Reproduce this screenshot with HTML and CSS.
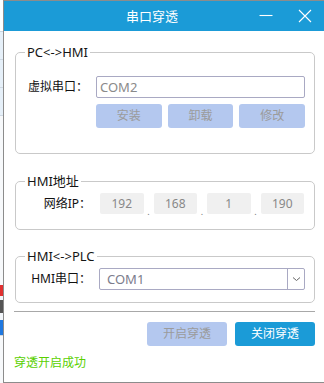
FILE: index.html
```html
<!DOCTYPE html>
<html lang="zh-CN">
<head>
<meta charset="utf-8">
<title>串口穿透</title>
<link rel="stylesheet" href="styles.css">
</head>
<body>
<div class="screen">
  <div class="backdrop">
    <div class="bd bd-white"></div>
    <div class="bd bd-tint"></div>
    <div class="bd bd-tint"></div>
    <div class="bd bd-tint"></div>
    <div class="bd bd-plain"></div>
    <div class="bd bd-red"></div>
    <div class="bd bd-dark"></div>
    <div class="bd bd-blue"></div>
    <div class="bd bd-rest"></div>
  </div>
  <div class="window">
    <div class="titlebar">
      <div class="title">串口穿透</div>
      <button class="tb-btn tb-min" type="button" aria-label="最小化">
        <svg width="14" height="14" viewBox="0 0 14 14"><path d="M0.5 6.5H13.5" stroke="#fff" stroke-width="1.1" fill="none"/></svg>
      </button>
      <button class="tb-btn tb-close" type="button" aria-label="关闭">
        <svg width="14" height="14" viewBox="0 0 14 14"><path d="M1 1L13 13M13 1L1 13" stroke="#fff" stroke-width="1.1" fill="none"/></svg>
      </button>
    </div>
    <div class="content">
      <fieldset class="group g1">
        <legend>PC&lt;-&gt;HMI</legend>
        <div class="g1-grid">
          <span class="lbl">虚拟串口：</span>
          <div class="field">COM2</div>
          <div class="btnrow">
            <button class="btn btn-off" type="button">安装</button>
            <button class="btn btn-off" type="button">卸载</button>
            <button class="btn btn-off" type="button">修改</button>
          </div>
        </div>
      </fieldset>

      <fieldset class="group g2">
        <legend>HMI地址</legend>
        <div class="g2-row">
          <span class="lbl lbl-ip">网络IP：</span>
          <div class="ip">192</div><span class="dot">.</span>
          <div class="ip">168</div><span class="dot">.</span>
          <div class="ip">1</div><span class="dot">.</span>
          <div class="ip">190</div>
        </div>
      </fieldset>

      <fieldset class="group g3">
        <legend>HMI&lt;-&gt;PLC</legend>
        <div class="g3-row">
          <span class="lbl lbl-plc">HMI串口：</span>
          <div class="select">
            <span class="select-val">COM1</span>
            <span class="select-arrow">
              <svg width="9" height="6" viewBox="0 0 9 6"><path d="M1 1.5L4.5 4.5L8 1.5" stroke="#666" stroke-width="1" fill="none"/></svg>
            </span>
          </div>
        </div>
      </fieldset>

      <div class="sep"></div>

      <div class="actions">
        <button class="btn btn-big btn-off" type="button">开启穿透</button>
        <button class="btn btn-big btn-on" type="button">关闭穿透</button>
      </div>

      <div class="status">穿透开启成功</div>
    </div>
  </div>
</div>
</body>
</html>
```

FILE: styles.css
```css
html, body {
  margin: 0;
  padding: 0;
}
body {
  width: 324px;
  height: 383px;
  overflow: hidden;
  background: #ffffff;
  font-family: "Noto Sans", "Noto Sans CJK SC", sans-serif;
  font-size: 12px;
  color: #111;
}
.screen {
  display: flex;
  height: 383px;
}
.backdrop {
  width: 3px;
  flex: none;
  display: flex;
  flex-direction: column;
  background: #f2f6fa;
}
.bd { flex: none; }
.bd-white { height: 31px; background: #ffffff; border-bottom: 1px solid #c8d4e0; }
.bd-tint { height: 27px; background: #e6f0f9; border-bottom: 1px solid #cfd9e3; }
.bd-plain { height: 169px; background: #f7f9fb; }
.bd-red { height: 11px; background: #e03030; }
.bd-dark { height: 13px; background: #555; margin-top: 4px; }
.bd-blue { height: 15px; background: #1f78e0; margin-top: 7px; }
.bd-rest { flex: 1; background: #f7f9fb; border-top: 1px solid #d0d8e0; }

.window {
  flex: 1;
  display: flex;
  flex-direction: column;
  border-top: 1px solid #8c8c8c;
  border-bottom: 1px solid #8c8c8c;
  border-left: 1px solid #8c8c8c;
  background: #ffffff;
}
.titlebar {
  height: 30px;
  flex: none;
  display: flex;
  align-items: center;
  background: #1b9bd7;
  color: #ffffff;
}
.title {
  flex: 1;
  text-align: center;
  padding-left: 48px;
  font-size: 13px;
  line-height: 30px;
}
.tb-btn {
  height: 30px;
  border: 0;
  padding: 0;
  background: none;
  display: flex;
  align-items: center;
  justify-content: center;
}
.tb-min { width: 28px; }
.tb-close { width: 30px; margin-left: 10px; margin-right: 4px; }
.tb-btn svg { display: block; }

.content {
  flex: 1;
  display: flex;
  flex-direction: column;
  padding: 13px 9px 0 11px;
}
.group {
  margin: 0;
  padding: 0;
  min-width: 0;
  border: 1px solid #c9c9c9;
  border-radius: 5px;
}
.group legend {
  margin-left: 9px;
  padding: 0 2px;
  font-size: 13px;
  line-height: 16px;
  color: #151515;
}
.lbl {
  text-align: right;
  font-size: 12px;
  line-height: 22px;
  color: #111;
  white-space: nowrap;
}

.g1-grid {
  display: grid;
  grid-template-columns: 72px 1fr;
  column-gap: 8px;
  row-gap: 6px;
  padding: 16px 9px 25px 0;
}
.field {
  height: 20px;
  border: 1px solid #a9a9c3;
  border-radius: 2px;
  padding-left: 3px;
  font-size: 13px;
  line-height: 20px;
  color: #8a8a8a;
}
.btnrow {
  grid-column: 2;
  display: flex;
  gap: 6px;
}
.btn {
  flex: 1;
  height: 24px;
  border: 0;
  border-radius: 3px;
  padding: 0;
  font-family: inherit;
  font-size: 12px;
  line-height: 24px;
}
.btn-off {
  background: #b4c8ef;
  color: #9b9b9b;
}
.btn-on {
  background: #1b9bd7;
  color: #ffffff;
}

.g2 { margin-top: 19px; }
.g2-row {
  display: flex;
  align-items: stretch;
  padding: 4px 10px 15px 0;
}
.lbl-ip { width: 75px; margin-right: 9px; line-height: 21px; }
.ip {
  flex: 1;
  height: 21px;
  background: #f0f0f0;
  border-radius: 2px;
  text-align: center;
  font-size: 12px;
  line-height: 21px;
  color: #888;
}
.dot {
  width: 10px;
  text-align: center;
  font-size: 9px;
  line-height: 9px;
  align-self: flex-end;
  color: #777;
  margin-bottom: -2px;
}

.g3 { margin-top: 18px; }
.g3-row {
  display: flex;
  padding: 4px 9px 12px 0;
}
.lbl-plc { width: 75px; margin-right: 8px; }
.select {
  flex: 1;
  height: 20px;
  display: flex;
  border: 1px solid #a9a9c3;
  border-radius: 2px;
}
.select-val {
  flex: 1;
  padding-left: 7px;
  font-size: 13px;
  line-height: 20px;
  color: #7c7c8c;
}
.select-arrow {
  width: 16px;
  border-left: 1px solid #a9a9c3;
  display: flex;
  align-items: center;
  justify-content: center;
}
.select-arrow svg { display: block; }

.sep {
  height: 1px;
  background: #a8a8a8;
  margin: 8px 0 0 -1px;
}
.actions {
  display: flex;
  justify-content: flex-end;
  gap: 8px;
  margin-top: 10px;
}
.btn-big {
  flex: none;
  width: 80px;
}
.status {
  margin: 9px 0 0 -1px;
  font-size: 12px;
  line-height: 16px;
  color: #5ad000;
}
```
